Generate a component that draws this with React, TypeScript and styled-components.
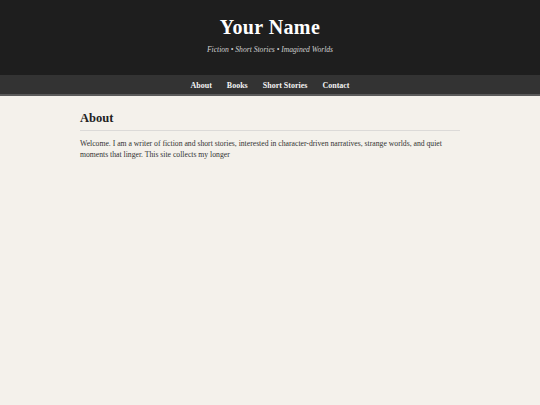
import styled, { createGlobalStyle } from "styled-components";

const GlobalStyle = createGlobalStyle`
  html, body {
    margin: 0;
    padding: 0;
    background: #f4f1eb;
    font-family: "Liberation Serif", Georgia, serif;
  }
`;

const Header = styled.header`
  background: #1e1e1e;
  color: #fff;
  text-align: center;
  height: 75px;
  box-sizing: border-box;
  padding-top: 15px;
`;

const Title = styled.h1`
  margin: 0;
  font-size: 20px;
  line-height: 24px;
  font-weight: bold;
  letter-spacing: 0.4px;
`;

const Tagline = styled.p`
  margin: 6px 0 0;
  font-size: 7.6px;
  line-height: 10px;
  font-style: italic;
  color: #cfcfcf;
`;

const Nav = styled.nav`
  background: #333;
  border-bottom: 2px solid #5a5a5a;
  height: 18px;
  padding-top: 1px;
  display: flex;
  justify-content: center;
  align-items: center;
  gap: 15px;
`;

const NavLink = styled.a`
  color: #f2f2f2;
  font-size: 8px;
  font-weight: bold;
  text-decoration: none;
`;

const Main = styled.main`
  width: 380px;
  margin: 0 auto;
  padding-top: 15px;
`;

const SectionTitle = styled.h2`
  margin: 0;
  font-size: 12.5px;
  line-height: 14px;
  font-weight: bold;
  color: #222;
  padding-bottom: 5px;
  border-bottom: 1px solid #dcdad8;
`;

const Text = styled.p`
  margin: 7px 0 0;
  font-size: 7.7px;
  line-height: 11px;
  color: #333;
`;

export default function App() {
  return (
    <>
      <GlobalStyle />
      <Header>
        <Title>Your Name</Title>
        <Tagline>Fiction • Short Stories • Imagined Worlds</Tagline>
      </Header>
      <Nav>
        <NavLink href="#">About</NavLink>
        <NavLink href="#">Books</NavLink>
        <NavLink href="#">Short Stories</NavLink>
        <NavLink href="#">Contact</NavLink>
      </Nav>
      <Main>
        <SectionTitle>About</SectionTitle>
        <Text>
          Welcome. I am a writer of fiction and short stories, interested in
          character-driven narratives, strange worlds, and quiet moments that
          linger. This site collects my longer
        </Text>
      </Main>
    </>
  );
}
